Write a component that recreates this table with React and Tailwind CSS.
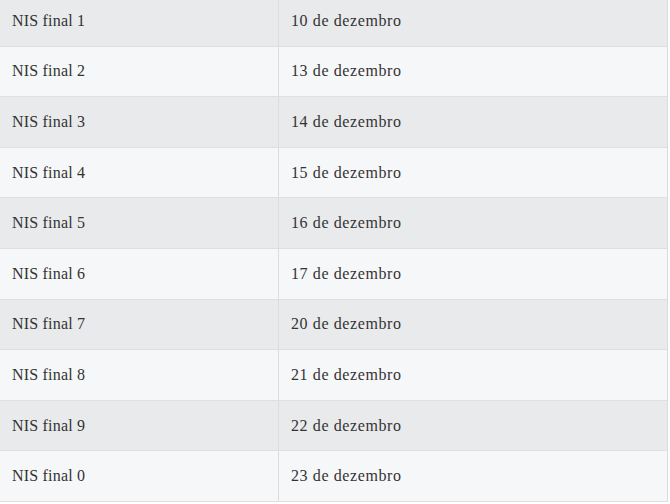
import React from 'react';

const linhas = [
    ['NIS final 1', '10 de dezembro'],
    ['NIS final 2', '13 de dezembro'],
    ['NIS final 3', '14 de dezembro'],
    ['NIS final 4', '15 de dezembro'],
    ['NIS final 5', '16 de dezembro'],
    ['NIS final 6', '17 de dezembro'],
    ['NIS final 7', '20 de dezembro'],
    ['NIS final 8', '21 de dezembro'],
    ['NIS final 9', '22 de dezembro'],
    ['NIS final 0', '23 de dezembro'],
];

export default function App() {
    return (
        <div className="w-[670px] h-[504px] overflow-hidden bg-white">
            <div className="w-[668px] -mt-[4px] border-r border-[#dcdcdc] text-[16px] text-[#333] font-['Liberation_Serif','Times_New_Roman',serif]">
                {linhas.map(([nis, data], i) => (
                    <div
                        key={nis}
                        className={`flex h-[50.6px] border-b border-[#dedfe0] ${i % 2 === 0 ? 'bg-[#e9eaeb]' : 'bg-[#f6f7f8]'}`}
                    >
                        <div className="w-[279px] shrink-0 flex items-center pl-[12px] tracking-[0.2px] border-r border-[#dcdcdc]">
                            {nis}
                        </div>
                        <div className="flex-1 flex items-center pl-[12px] tracking-[0.6px]">
                            {data}
                        </div>
                    </div>
                ))}
            </div>
        </div>
    );
}
